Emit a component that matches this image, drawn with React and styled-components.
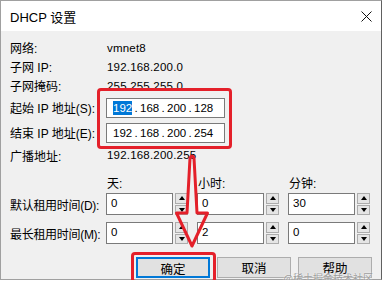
import React from 'react';
import styled, { createGlobalStyle } from 'styled-components';

const ui = `'Liberation Sans', 'Noto Sans CJK SC', sans-serif`;

const GlobalStyle = createGlobalStyle`
  * { box-sizing: border-box; }
  body {
    margin: 0;
    background: #fff;
  }
`;

const Window = styled.div`
  position: relative;
  width: 382px;
  height: 280px;
  display: flex;
  flex-direction: column;
  border: 1px solid #a0a0a0;
  border-right-color: #606060;
  background: #f0f0f0;
  font-family: ${ui};
  font-size: 12px;
  color: #000;
`;

const TitleBar = styled.div`
  height: 30px;
  flex-shrink: 0;
  display: flex;
  align-items: center;
  justify-content: space-between;
  padding: 0 9px 0 9px;
  background: #fff;
  font-size: 13px;
`;

const Body = styled.div`
  display: flex;
  flex-direction: column;
  padding: 7px 9px 0 9px;
`;

const Row = styled.div`
  display: flex;
  align-items: center;
  gap: ${({ $gap }) => $gap || 0}px;
  height: ${({ $h }) => $h || 19}px;
  margin-top: ${({ $mt }) => $mt || 0}px;
  flex-shrink: 0;
`;

const Label = styled.div`
  width: ${({ $w }) => $w || 97}px;
  flex-shrink: 0;
  white-space: nowrap;
  letter-spacing: ${({ $tight }) => ($tight ? '-0.3px' : '0')};
`;

const Value = styled.div`
  font-size: 11.5px;
  letter-spacing: 0.2px;
`;

const IpField = styled.div`
  width: 119px;
  height: 20px;
  display: flex;
  align-items: center;
  padding-left: 6px;
  background: #fff;
  border: 1px solid #7a7a7a;
  font-size: 11.5px;
`;

const Octet = styled.span`
  width: 19px;
  text-align: center;
  line-height: 14px;
  background: ${({ $selected }) => ($selected ? '#0078d7' : 'transparent')};
  color: ${({ $selected }) => ($selected ? '#fff' : '#000')};
`;

const Dot = styled.span`
  width: 8px;
  text-align: center;
`;

const ColHead = styled.div`
  width: 82px;
  flex-shrink: 0;
  padding-left: 1px;
`;

const Spin = styled.div`
  width: 82px;
  flex-shrink: 0;
  display: flex;
  gap: 2px;
  height: 22px;
`;

const SpinField = styled.div`
  flex: 1;
  padding: 2px 4px;
  background: #fff;
  border: 1px solid #7a7a7a;
  font-size: 11.5px;
  line-height: 15px;
`;

const SpinButtons = styled.div`
  width: 13px;
  display: flex;
  flex-direction: column;
  gap: 1px;
`;

const SpinBtn = styled.div`
  flex: 1;
  display: flex;
  align-items: center;
  justify-content: center;
  background: #e5e5e5;
  border: 1px solid #acacac;
`;

const Tri = styled.span`
  width: 0;
  height: 0;
  border-left: 3.5px solid transparent;
  border-right: 3.5px solid transparent;
  ${({ $down }) =>
    $down ? 'border-top: 4px solid #000;' : 'border-bottom: 4px solid #000;'}
`;

const Footer = styled.div`
  display: flex;
  justify-content: flex-end;
  gap: 7px;
  margin-top: 13px;
`;

const Button = styled.button`
  width: 74px;
  height: 21px;
  padding: 0;
  background: #e1e1e1;
  border: ${({ $primary }) => ($primary ? '2px solid #0078d7' : '1px solid #adadad')};
  font-family: ${ui};
  font-size: 12.5px;
  color: #000;
`;

const Mark = styled.div`
  position: absolute;
  left: ${({ $x }) => $x}px;
  top: ${({ $y }) => $y}px;
  width: ${({ $w }) => $w}px;
  height: ${({ $h }) => $h}px;
  border: 3px solid #e4202a;
  border-radius: 4px;
  pointer-events: none;
`;

const Overlay = styled.svg`
  position: absolute;
  left: -1px;
  top: -1px;
  pointer-events: none;
`;

const Watermark = styled.div`
  position: absolute;
  right: 8px;
  top: 271px;
  font-size: 10px;
  line-height: 12px;
  color: rgba(130, 130, 130, 0.75);
  text-shadow: 0 0 2px #fff;
  font-family: 'Noto Sans CJK SC', sans-serif;
`;

function SpinBox({ value }) {
  return (
    <Spin>
      <SpinField>{value}</SpinField>
      <SpinButtons>
        <SpinBtn><Tri /></SpinBtn>
        <SpinBtn><Tri $down /></SpinBtn>
      </SpinButtons>
    </Spin>
  );
}

function IpBox({ octets, selectFirst }) {
  return (
    <IpField>
      {octets.map((o, i) => (
        <React.Fragment key={i}>
          {i > 0 && <Dot>.</Dot>}
          <Octet $selected={selectFirst && i === 0}>{o}</Octet>
        </React.Fragment>
      ))}
    </IpField>
  );
}

export default function App() {
  return (
    <>
      <GlobalStyle />
      <Window>
        <TitleBar>
          <span>DHCP 设置</span>
          <svg width="11" height="11" viewBox="0 0 11 11">
            <path d="M0.5 0.5 L10.5 10.5 M10.5 0.5 L0.5 10.5" stroke="#111" strokeWidth="1" />
          </svg>
        </TitleBar>
        <Body>
          <Row>
            <Label>网络:</Label>
            <Value>vmnet8</Value>
          </Row>
          <Row>
            <Label>子网 IP:</Label>
            <Value>192.168.200.0</Value>
          </Row>
          <Row>
            <Label>子网掩码:</Label>
            <Value>255.255.255.0</Value>
          </Row>
          <Row $h={25}>
            <Label $w={96}>起始 IP 地址(S):</Label>
            <IpBox octets={['192', '168', '200', '128']} selectFirst />
          </Row>
          <Row $h={25}>
            <Label $w={96}>结束 IP 地址(E):</Label>
            <IpBox octets={['192', '168', '200', '254']} />
          </Row>
          <Row $h={20}>
            <Label>广播地址:</Label>
            <Value>192.168.200.255</Value>
          </Row>
          <Row $h={19} $mt={8} $gap={9}>
            <Label $w={87} />
            <ColHead>天:</ColHead>
            <ColHead>小时:</ColHead>
            <ColHead>分钟:</ColHead>
          </Row>
          <Row $h={22} $mt={1} $gap={9}>
            <Label $w={87} $tight>默认租用时间(D):</Label>
            <SpinBox value="0" />
            <SpinBox value="0" />
            <SpinBox value="30" />
          </Row>
          <Row $h={22} $mt={7} $gap={9}>
            <Label $w={87} $tight>最长租用时间(M):</Label>
            <SpinBox value="0" />
            <SpinBox value="2" />
            <SpinBox value="0" />
          </Row>
          <Footer>
            <Button $primary>确定</Button>
            <Button>取消</Button>
            <Button>帮助</Button>
          </Footer>
        </Body>
        <Watermark>@稀土掘金技术社区</Watermark>
        <Mark $x={96} $y={87} $w={135} $h={61} />
        <Mark $x={130} $y={251} $w={85} $h={31} />
        <Overlay width="383" height="290" viewBox="0 0 383 290">
          <path
            d="M190 158 Q192 154 194 158 L197 213 L207.5 213 L192 246 L176.5 213 L187 213 Z"
            fill="none"
            stroke="#e4202a"
            strokeWidth="3"
            strokeLinejoin="round"
          />
        </Overlay>
      </Window>
    </>
  );
}
